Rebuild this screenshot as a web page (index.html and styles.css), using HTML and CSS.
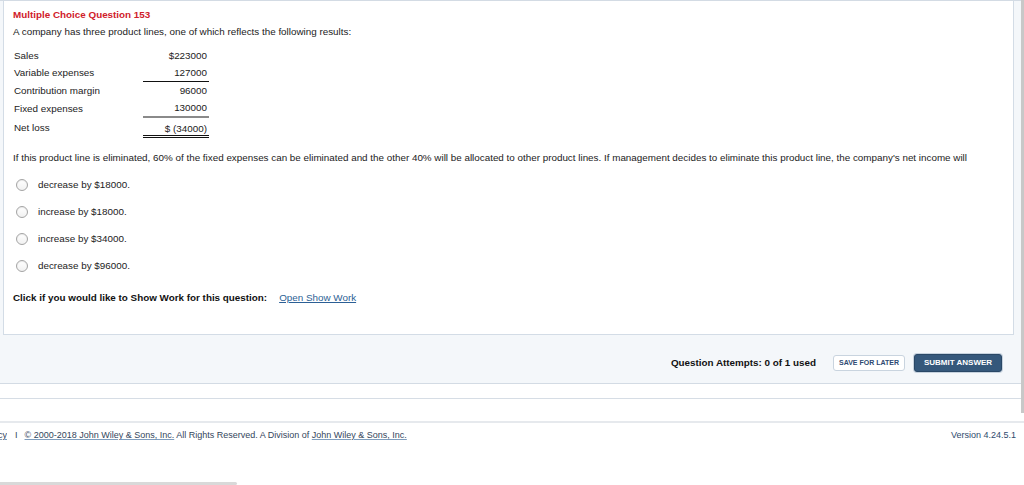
FILE: index.html
```html
<!DOCTYPE html>
<html lang="en">
<head>
<meta charset="utf-8">
<title>Multiple Choice Question 153</title>
<link rel="stylesheet" href="styles.css">
</head>
<body>
<div class="window">
  <div class="app">
    <div class="stage">
      <div class="panel">
        <div class="q-title">Multiple Choice Question 153</div>
        <p class="intro">A company has three product lines, one of which reflects the following results:</p>
        <table class="fin">
          <tr><td class="lbl">Sales</td><td class="val">$223000</td></tr>
          <tr><td class="lbl">Variable expenses</td><td class="val rule">127000</td></tr>
          <tr><td class="lbl">Contribution margin</td><td class="val">96000</td></tr>
          <tr><td class="lbl">Fixed expenses</td><td class="val rule2">130000</td></tr>
          <tr class="last"><td class="lbl">Net loss</td><td class="val dbl">$ (34000)</td></tr>
        </table>
        <p class="stem">If this product line is eliminated, 60% of the fixed expenses can be eliminated and the other 40% will be allocated to other product lines. If management decides to eliminate this product line, the company's net income will</p>
        <ul class="choices">
          <li><span class="radio"></span><span>decrease by $18000.</span></li>
          <li><span class="radio"></span><span>increase by $18000.</span></li>
          <li><span class="radio"></span><span>increase by $34000.</span></li>
          <li><span class="radio"></span><span>decrease by $96000.</span></li>
        </ul>
        <div class="showwork"><strong>Click if you would like to Show Work for this question:</strong><a href="#">Open Show Work</a></div>
      </div>
      <div class="actions">
        <span class="attempts">Question Attempts: 0 of 1 used</span>
        <button class="btn save">SAVE FOR LATER</button>
        <button class="btn submit">SUBMIT ANSWER</button>
      </div>
    </div>
    <div class="spacer1"></div>
    <div class="spacer2"></div>
  </div>
  <div class="vscroll"></div>
</div>
<footer class="footer">
  <div class="legal">
    <span class="clip"><a href="#" class="privacy">Privacy Policy</a></span>
    <span class="sep">I</span>
    <a href="#">© 2000-2018 John Wiley &amp; Sons, Inc.</a> All Rights Reserved. A Division of <a href="#">John Wiley &amp; Sons, Inc.</a>
  </div>
  <div class="version">Version 4.24.5.1</div>
</footer>
<div class="hscroll"></div>
</body>
</html>
```

FILE: styles.css
```css
* { box-sizing: border-box; }
html, body { margin: 0; padding: 0; }
body {
  width: 1024px;
  height: 485px;
  overflow: hidden;
  background: #ffffff;
  font-family: "Liberation Sans", Arial, Helvetica, sans-serif;
  font-size: 9.85px;
  color: #222222;
}

.window { display: flex; align-items: flex-start; }
.app { flex: 1; border-top: 1px solid #d3dbe4; }
.vscroll { width: 3px; height: 413px; background: #c8c8c8; }

.stage {
  background: #f4f7fa;
  padding: 0 7px 0 3px;
  border-bottom: 1px solid #d3dbe4;
}

.panel {
  background: #ffffff;
  border: 1px solid #d3dce6;
  border-top: none;
  height: 334px;
  padding: 7px 9px 0 9px;
  line-height: 13px;
}

.q-title { color: #d0202a; font-weight: bold; }
.intro { margin: 4px 0 0 0; }

.fin { border-collapse: collapse; margin-top: 9px; }
.fin td { padding: 2px 0; height: 17px; line-height: 13px; vertical-align: middle; }
.fin .lbl { width: 130px; padding-left: 1px; }
.fin .val { width: 66px; text-align: right; padding-right: 2px; }
.fin .rule { border-bottom: 1px solid #111111; }
.fin .rule2 { border-bottom: 2px solid #8a8a8a; }
.fin .last td { padding-top: 4px; padding-bottom: 0; height: 16px; vertical-align: top; }
.fin .dbl { border-bottom: 3px double #111111; }

.stem { margin: 13px 0 0 0; }

.choices { list-style: none; margin: 7px 0 0 0; padding: 0; }
.choices li { display: flex; align-items: center; height: 27px; }
.radio {
  width: 12px; height: 12px;
  margin-left: 3px; margin-right: 10px;
  border-radius: 50%;
  border: 1px solid #a4a4a4;
  background: linear-gradient(#ffffff, #f1f1f1);
  box-shadow: inset 0 1px 1px rgba(0,0,0,0.08);
}

.showwork { margin-top: 12px; }
.showwork strong { font-weight: bold; color: #111; }
.showwork a { margin-left: 12px; color: #2c5f95; text-decoration: underline; }

.actions {
  height: 48px;
  padding: 7px 12px 0 0;
  display: flex;
  align-items: center;
  justify-content: flex-end;
}
.attempts { font-weight: bold; color: #111; margin-right: 17px; }
.btn {
  font-family: "Liberation Sans", Arial, sans-serif;
  font-weight: bold;
  border-radius: 3px;
  padding: 0;
  cursor: pointer;
}
.save {
  width: 72px; height: 16px;
  font-size: 7px;
  color: #2e4a72;
  background: #ffffff;
  border: 1px solid #c9d4df;
  margin-right: 9px;
}
.submit {
  width: 88px; height: 18px;
  font-size: 8px;
  color: #ffffff;
  background: #35587b;
  border: 1px solid #2a4866;
  box-shadow: 0 0 0 1px #c6d2de;
}

.spacer1 { height: 15px; border-bottom: 1px solid #d6dde5; }
.spacer2 { height: 14px; }

.footer {
  display: flex;
  justify-content: space-between;
  align-items: center;
  border-top: 2px solid #e6e9ed;
  margin-top: 8px;
  padding: 7px 8px 0 0;
  font-size: 9px;
  line-height: 11px;
  color: #34465c;
}
.legal { display: flex; align-items: center; white-space: pre; }
.legal a { color: #34465c; text-decoration: underline; text-decoration-color: #7f9dbd; }
.clip { display: inline-block; width: 7px; overflow: hidden; direction: rtl; }
.sep { margin: 0 7px 0 8px; }
.version { color: #2f4a6d; }

.hscroll {
  width: 237px; height: 3px;
  margin-top: 41px;
  background: #d9d9d9;
  border-radius: 0 2px 2px 0;
}
```
